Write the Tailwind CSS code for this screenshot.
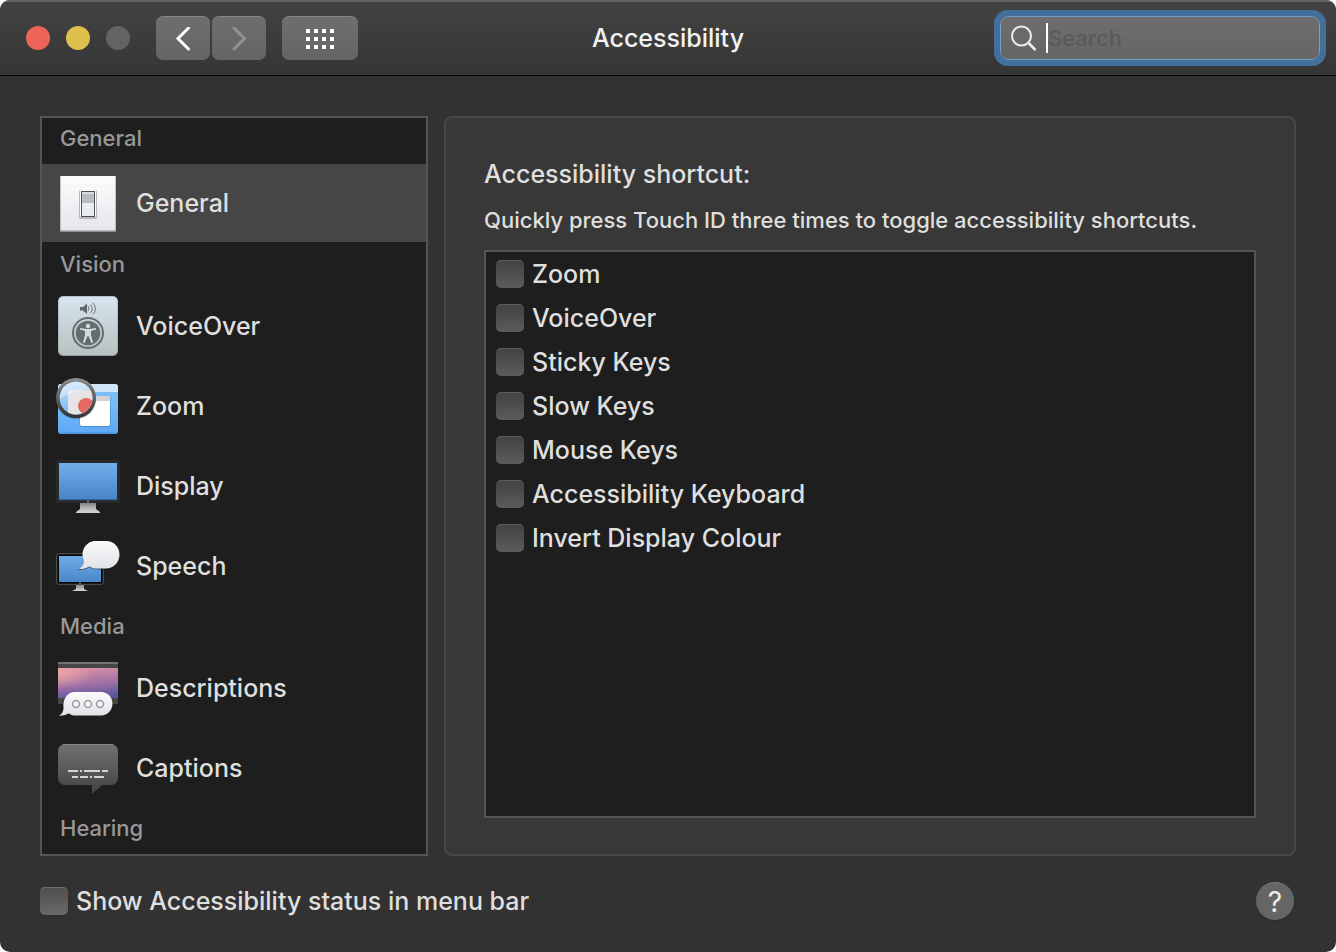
<!DOCTYPE html>
<html lang="en">
<head>
<meta charset="utf-8">
<meta name="viewport" content="width=device-width, initial-scale=1">
<title>Accessibility</title>
<script src="https://cdn.jsdelivr.net/npm/@tailwindcss/browser@4"></script>
</head>
<body class="bg-white font-[Inter,Roboto,sans-serif] text-[25px] leading-8 font-medium text-[#dfdfdf]">
<div class="flex min-h-screen flex-col overflow-hidden rounded-[10px] bg-[#323232]">

  <header class="grid h-[76px] shrink-0 grid-cols-[1fr_auto_1fr] items-center border-t-2 border-b border-t-[#646464] border-b-black bg-linear-to-b from-[#424242] to-[#363636] pb-px">
    <div class="flex items-center pl-[26px]">
      <div class="flex gap-4">
        <button aria-label="Close" class="size-6 rounded-full bg-[#ed6559]"></button>
        <button aria-label="Minimise" class="size-6 rounded-full bg-[#e0c04c]"></button>
        <button aria-label="Full screen" disabled class="size-6 rounded-full bg-[#636363]"></button>
      </div>
      <div class="ml-[26px] flex gap-[2px]">
        <button aria-label="Back" class="flex h-11 w-[54px] items-center justify-center rounded-[7px] border-t border-[#858585] bg-linear-to-b from-[#6e6e6e] to-[#656565]">
          <svg class="size-6" viewBox="0 0 24 24" fill="none" stroke="#fff" stroke-width="3" stroke-linecap="round"><path d="M17.500 1 7 11.500l10.500 10.500"/></svg>
        </button>
        <button aria-label="Forward" disabled class="flex h-11 w-[54px] items-center justify-center rounded-[7px] border-t border-[#858585] bg-linear-to-b from-[#6e6e6e] to-[#656565]">
          <svg class="size-6" viewBox="0 0 24 24" fill="none" stroke="#929292" stroke-width="3" stroke-linecap="round"><path d="M7 1l10.500 10.500L7 22"/></svg>
        </button>
      </div>
      <button aria-label="Show all" class="ml-4 flex h-11 w-[76px] items-center justify-center rounded-[7px] border-t border-[#858585] bg-linear-to-b from-[#6e6e6e] to-[#656565]">
        <svg class="h-5 w-7" viewBox="0 0 28 20" fill="#fff"><path d="M0 0h4v4H0zM8 0h4v4H8zM16 0h4v4h-4zM24 0h4v4h-4zM0 8h4v4H0zM8 8h4v4H8zM16 8h4v4h-4zM24 8h4v4h-4zM0 16h4v4H0zM8 16h4v4H8zM16 16h4v4h-4zM24 16h4v4h-4z"/></svg>
      </button>
    </div>
    <h1 class="text-[#f2f2f2]">Accessibility</h1>
    <div class="flex justify-end pr-4">
      <label class="relative flex h-11 w-[320px] items-center rounded-lg border border-[#6f9fcc] bg-linear-to-b from-[#6e6e6e] to-[#656565] pl-[9px] ring-6 ring-[#43709b]">
        <svg class="size-7 shrink-0" viewBox="0 0 28 28" fill="none" stroke="#ececec" stroke-width="2"><circle cx="11.500" cy="12" r="9.500"/><path stroke-width="2.500" d="m18.500 19 7 7"/></svg>
        <span class="ml-2 h-[30px] w-[2px] shrink-0 bg-white"></span>
        <input type="text" aria-label="Search" placeholder="Search" class="w-full min-w-0 bg-transparent text-[22px] caret-transparent outline-none placeholder:text-[#5a5a5a]">
      </label>
    </div>
  </header>

  <main class="flex flex-1 gap-4 px-10 pt-10">
    <nav aria-label="Categories" class="w-[388px] shrink-0 overflow-hidden border-2 border-[#555] bg-[#1e1e1e]">
      <h2 class="mb-[6px] pl-[18px] text-[22px] leading-10 text-[#989898]">General</h2>
      <button aria-current="true" class="mb-[2px] flex h-[78px] w-full items-center gap-4 bg-[#464646] pl-[14px] text-left">
        <svg class="size-16 shrink-0" viewBox="0 0 64 64">
          <defs><linearGradient id="plate" x2="0" y2="1"><stop stop-color="#fcfcfd"/><stop offset="1" stop-color="#e4e6ea"/></linearGradient></defs>
          <path d="M4 5h56v56H4z" fill="#8e9094"/><path d="M4.500 5h55v54.500h-55z" fill="url(#plate)"/>
          <rect x="23" y="19" width="18" height="29" rx="2" fill="#b5b7ba"/><rect x="24" y="19" width="16" height="27" rx="1" fill="#fff"/>
          <path d="M25 20h14v26H25z" fill="#4c4e51"/><path d="M26 21h12v24H26z" fill="#e7edf1"/><path d="M26 23h12v9H26z" fill="#b9bcc0"/><path d="M26 21h12v2H26z" fill="#dadcdf"/>
        </svg>
        General
      </button>
      <h2 class="mb-[2px] pl-[18px] text-[22px] leading-10 text-[#989898]">Vision</h2>
      <button class="flex h-20 w-full items-center gap-4 pl-[14px] text-left">
        <svg class="size-16 shrink-0" viewBox="0 0 64 64">
          <defs><linearGradient id="vo" x2="0" y2="1"><stop stop-color="#d6e6ee"/><stop offset="1" stop-color="#b9c0c1"/></linearGradient></defs>
          <rect x="2" y="2" width="60" height="60" rx="5" fill="#96a0a4"/><rect x="2.500" y="2.500" width="59" height="58.500" rx="5" fill="url(#vo)"/>
          <path d="M24 13h3l4-3.500v10.500l-4-3.500h-3z" fill="#62696c"/>
          <g fill="none" stroke="#6d7579"><path d="M32 12q2 2.500 0 5M34.500 10.500q3.500 4.500 0 8.500M37 9q5 6 0 11.500"/></g>
          <circle cx="32" cy="39" r="15" fill="none" stroke="#666d70" stroke-width="2"/><circle cx="32" cy="39" r="12.300" fill="#666d70"/>
          <g fill="#d3dcdf"><circle cx="32" cy="32" r="2.200"/><path d="m24 34 6 1h4l6-1v1.500L35 37v4l2 7.500-1.600.5L32.500 42h-1L28.600 49l-1.600-.5 2-7.500v-4l-5-1.500z"/></g>
        </svg>
        VoiceOver
      </button>
      <button class="flex h-20 w-full items-center gap-4 pl-[14px] text-left">
        <svg class="size-16 shrink-0 overflow-visible" viewBox="0 -6 64 64">
          <defs>
            <linearGradient id="desk" x2="0" y2="1"><stop stop-color="#84c3f8"/><stop offset="1" stop-color="#5eaaf5"/></linearGradient>
            <linearGradient id="rim" x2="0" y2="1"><stop stop-color="#929292"/><stop offset="1" stop-color="#303030"/></linearGradient>
            <linearGradient id="lens" x2="0" y2="1"><stop stop-color="#c3e0f8"/><stop offset="1" stop-color="#78bbf4"/></linearGradient>
            <clipPath id="lensclip"><circle cx="20" cy="18" r="16.500"/></clipPath>
          </defs>
          <rect x="2" y="4" width="60" height="50" rx="3" fill="url(#desk)"/><path d="M5 4h54a3 3 0 0 1 3 3v5H2V7a3 3 0 0 1 3-3z" fill="#cfe5f8"/><path d="M3 53h58" stroke="#448ccf"/>
          <rect x="23.500" y="16" width="31" height="31" rx="2" fill="#4c8ec9"/><rect x="24" y="16" width="30" height="30" rx="2" fill="#fff"/><path d="M24 16h30v5H24z" fill="#d2d2d2"/>
          <circle cx="20" cy="19" r="20" fill="#000" opacity=".25"/>
          <circle cx="20" cy="18" r="20" fill="url(#rim)"/><circle cx="20" cy="18" r="17" fill="#444"/><circle cx="20" cy="18" r="16.500" fill="url(#lens)"/>
          <g clip-path="url(#lensclip)"><rect x="12" y="10" width="30" height="30" rx="4" fill="#e5e5e7"/><circle cx="30" cy="26" r="8" fill="#e66a63"/><path d="M0 0h42v9Q20 8 4 19z" fill="#fff" opacity=".35"/></g>
        </svg>
        Zoom
      </button>
      <button class="flex h-20 w-full items-center gap-4 pl-[14px] text-left">
        <svg class="size-16 shrink-0" viewBox="0 0 64 64">
          <defs>
            <linearGradient id="screen" x2="0" y2="1"><stop stop-color="#6fadea"/><stop offset="1" stop-color="#4886c7"/></linearGradient>
            <linearGradient id="stand" x2="0" y2="1"><stop stop-color="#858585"/><stop offset=".6" stop-color="#bdbdbd"/><stop offset="1" stop-color="#d2d2d2"/></linearGradient>
          </defs>
          <rect y="6" width="64" height="43" rx="2" fill="#292929"/><path d="M3 9h58v37H3z" fill="url(#screen)"/><path d="M3 46h58" stroke="#234568"/><circle cx="32" cy="47.500" r="1" fill="#999"/>
          <path d="M24 49h16v6l4 3v1H20v-1l4-3z" fill="url(#stand)"/>
        </svg>
        Display
      </button>
      <button class="flex h-20 w-full items-center gap-4 pl-[14px] text-left">
        <svg class="size-16 shrink-0" viewBox="0 0 64 64">
          <defs><linearGradient id="bubble" x2="0" y2="1"><stop stop-color="#fbfbfc"/><stop offset="1" stop-color="#dfe2e6"/></linearGradient></defs>
          <rect x=".75" y="19.750" width="46.500" height="30.500" rx="2" fill="#050505" stroke="#5c5c5c"/><path d="M3 22h42v26H3z" fill="url(#screen)"/>
          <circle cx="24" cy="49" r="1" fill="#777"/><path d="M20 51h8v4l4 2H16l4-2z" fill="url(#stand)"/>
          <path d="M40 8h10c8 0 14 6 14 14s-6 13.500-14 13.500H40c-4 0-5-2-7-2-3 2-7 2.500-11 2.500 3-2 5-4.500 5-9-2-11 5-19 13-19z" fill="#222" opacity=".5"/>
          <path d="M39 7h11c8 0 13.500 6 13.500 13.500S58 34.500 50 34.500H39c-3 0-4.500-2-6-2-3 2-6 2.500-10 2.500 3-2 5-5 4.500-9C24 16 31 7 39 7z" fill="url(#bubble)"/>
        </svg>
        Speech
      </button>
      <h2 class="mb-[2px] pl-[18px] text-[22px] leading-10 text-[#989898]">Media</h2>
      <button class="flex h-20 w-full items-center gap-4 pl-[14px] text-left">
        <svg class="size-16 shrink-0" viewBox="0 0 64 64">
          <defs>
            <linearGradient id="sky" x1=".4" x2=".6" y2="1"><stop stop-color="#d890a3"/><stop offset=".5" stop-color="#a573a5"/><stop offset="1" stop-color="#5a55a0"/></linearGradient>
            <radialGradient id="glow" cx="0" cy=".1" r=".6"><stop stop-color="#eba3a8"/><stop offset="1" stop-color="#eba3a8" stop-opacity="0"/></radialGradient>
          </defs>
          <path d="M2 6h60v42H2z" fill="#464646"/><path d="M2 6h60v2H2z" fill="#747474"/>
          <path d="M2 12h60v30H2z" fill="url(#sky)"/><path d="M2 12h60v30H2z" fill="url(#glow)"/>
          <path d="M19 37h26c7 0 12 5 12 11.500S52 60 45 60H18c-3 0-4-2-6-2-2 1.500-5 2-10 2 3-2 5-4.500 5-8.500C5.500 43 11 37 19 37z" fill="#222" opacity=".5"/>
          <path d="M19 36h26c6.500 0 11.500 5 11.500 11.500S51.500 59.500 45 59.500H18c-3 0-4-2-6-2-2 1.500-5 2-9 2.500 3-2 4.500-5 4.500-8C6.500 42 12 36 19 36z" fill="url(#bubble)"/>
          <g fill="#f4f4f5" stroke="#999b9e" stroke-width="1.500"><circle cx="20" cy="48" r="3.500"/><circle cx="32" cy="48" r="3.500"/><circle cx="44" cy="48" r="3.500"/></g>
        </svg>
        Descriptions
      </button>
      <button class="flex h-20 w-full items-center gap-4 pl-[14px] text-left">
        <svg class="size-16 shrink-0" viewBox="0 0 64 64">
          <defs><linearGradient id="cap" x2="0" y2="1"><stop stop-color="#717171"/><stop offset="1" stop-color="#424242"/></linearGradient></defs>
          <path d="M9 8h46a7 7 0 0 1 7 7v27a7 7 0 0 1-7 7H46L36 58V49H9a7 7 0 0 1-7-7V15a7 7 0 0 1 7-7z" fill="url(#cap)"/><path d="M7 8.500h50" stroke="#858585"/>
          <path d="M12 35h10m2 0h2m2 0h16m2 0h6M16 41h6m2 0h8m2 0h2m2 0h10" stroke="#d4d4d4" stroke-width="2"/>
        </svg>
        Captions
      </button>
      <h2 class="pl-[18px] text-[22px] leading-10 text-[#989898]">Hearing</h2>
    </nav>

    <section class="flex min-w-0 flex-1 flex-col rounded-lg border-2 border-[#484848] bg-[#383838] px-[38px] pt-[38px] pb-9">
      <h2 class="leading-9">Accessibility shortcut:</h2>
      <p class="mt-[10px] mb-3 text-[22px] leading-9">Quickly press Touch ID three times to toggle accessibility shortcuts.</p>
      <div class="flex flex-1 flex-col border-2 border-[#555] bg-[#1e1e1e] pl-[10px]">
        <label class="flex h-11 items-center gap-2"><input type="checkbox" class="size-7 appearance-none rounded-[5px] border-t border-[#606060] bg-linear-to-b from-[#424242] to-[#5c5c5c]">Zoom</label>
        <label class="flex h-11 items-center gap-2"><input type="checkbox" class="size-7 appearance-none rounded-[5px] border-t border-[#606060] bg-linear-to-b from-[#424242] to-[#5c5c5c]">VoiceOver</label>
        <label class="flex h-11 items-center gap-2"><input type="checkbox" class="size-7 appearance-none rounded-[5px] border-t border-[#606060] bg-linear-to-b from-[#424242] to-[#5c5c5c]">Sticky Keys</label>
        <label class="flex h-11 items-center gap-2"><input type="checkbox" class="size-7 appearance-none rounded-[5px] border-t border-[#606060] bg-linear-to-b from-[#424242] to-[#5c5c5c]">Slow Keys</label>
        <label class="flex h-11 items-center gap-2"><input type="checkbox" class="size-7 appearance-none rounded-[5px] border-t border-[#606060] bg-linear-to-b from-[#424242] to-[#5c5c5c]">Mouse Keys</label>
        <label class="flex h-11 items-center gap-2"><input type="checkbox" class="size-7 appearance-none rounded-[5px] border-t border-[#606060] bg-linear-to-b from-[#424242] to-[#5c5c5c]">Accessibility Keyboard</label>
        <label class="flex h-11 items-center gap-2"><input type="checkbox" class="size-7 appearance-none rounded-[5px] border-t border-[#606060] bg-linear-to-b from-[#424242] to-[#5c5c5c]">Invert Display Colour</label>
      </div>
    </section>
  </main>

  <footer class="flex h-24 shrink-0 items-center justify-between pr-[42px] pb-[6px] pl-10">
    <label class="flex items-center gap-2"><input type="checkbox" class="size-7 appearance-none rounded-[5px] border-t border-[#707070] bg-linear-to-b from-[#505050] to-[#696969] shadow-sm">Show Accessibility status in menu bar</label>
    <button aria-label="Help" class="flex size-[38px] items-center justify-center rounded-full border-t border-[#7c7c7c] bg-[#656565] text-[28px] font-normal text-[#ececec] shadow-sm">?</button>
  </footer>
</div>
</body>
</html>
